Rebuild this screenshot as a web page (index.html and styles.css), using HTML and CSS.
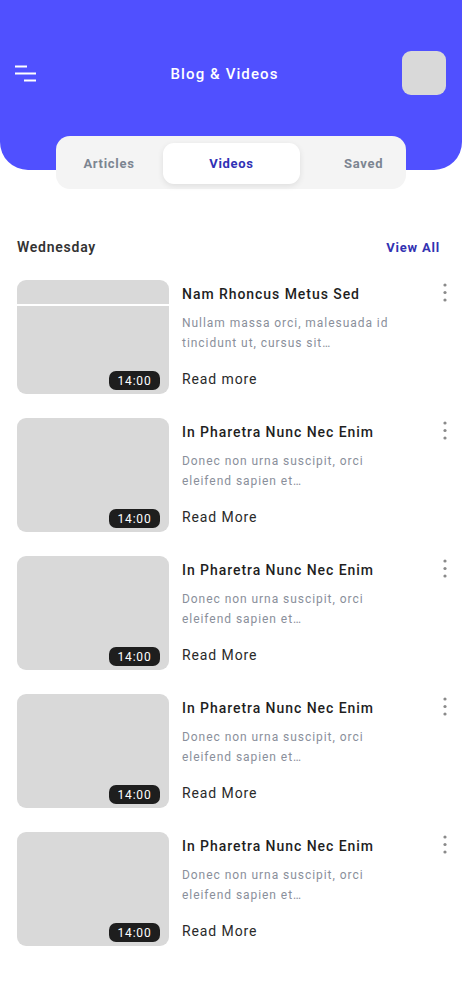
FILE: index.html
```html
<!DOCTYPE html>
<html lang="en">
<head>
<meta charset="utf-8">
<title>Blog & Videos</title>
<link rel="stylesheet" href="styles.css">
</head>
<body>
<header class="header">
  <div class="topbar">
    <svg class="menu" width="22" height="18" viewBox="0 0 22 18" aria-hidden="true">
      <path d="M0 1.5H12M0 8.5H21M9 15.5H21" stroke="#fff" stroke-width="2" fill="none"/>
    </svg>
    <h1 class="title">Blog &amp; Videos</h1>
    <div class="avatar"></div>
  </div>
</header>

<nav class="tabs">
  <span class="tab tab-articles">Articles</span>
  <span class="tab tab-active">Videos</span>
  <span class="tab tab-saved">Saved</span>
</nav>

<div class="section-head">
  <span class="day">Wednesday</span>
  <span class="view-all">View All</span>
</div>

<main class="list">
  <article class="card">
    <div class="thumb"><span class="thumb-line"></span><span class="badge">14:00</span></div>
    <div class="info">
      <h2 class="card-title">Nam Rhoncus Metus Sed</h2>
      <p class="desc">Nullam massa orci, malesuada id tincidunt ut, cursus sit…</p>
      <span class="more">Read more</span>
    </div>
    <svg class="kebab" width="4" height="20" viewBox="0 0 4 20" aria-hidden="true"><circle cx="2" cy="2" r="1.6"/><circle cx="2" cy="9.5" r="1.6"/><circle cx="2" cy="17" r="1.6"/></svg>
  </article>

  <article class="card">
    <div class="thumb"><span class="badge">14:00</span></div>
    <div class="info">
      <h2 class="card-title">In Pharetra Nunc Nec Enim</h2>
      <p class="desc">Donec non urna suscipit, orci eleifend sapien et…</p>
      <span class="more">Read More</span>
    </div>
    <svg class="kebab" width="4" height="20" viewBox="0 0 4 20" aria-hidden="true"><circle cx="2" cy="2" r="1.6"/><circle cx="2" cy="9.5" r="1.6"/><circle cx="2" cy="17" r="1.6"/></svg>
  </article>

  <article class="card">
    <div class="thumb"><span class="badge">14:00</span></div>
    <div class="info">
      <h2 class="card-title">In Pharetra Nunc Nec Enim</h2>
      <p class="desc">Donec non urna suscipit, orci eleifend sapien et…</p>
      <span class="more">Read More</span>
    </div>
    <svg class="kebab" width="4" height="20" viewBox="0 0 4 20" aria-hidden="true"><circle cx="2" cy="2" r="1.6"/><circle cx="2" cy="9.5" r="1.6"/><circle cx="2" cy="17" r="1.6"/></svg>
  </article>

  <article class="card">
    <div class="thumb"><span class="badge">14:00</span></div>
    <div class="info">
      <h2 class="card-title">In Pharetra Nunc Nec Enim</h2>
      <p class="desc">Donec non urna suscipit, orci eleifend sapien et…</p>
      <span class="more">Read More</span>
    </div>
    <svg class="kebab" width="4" height="20" viewBox="0 0 4 20" aria-hidden="true"><circle cx="2" cy="2" r="1.6"/><circle cx="2" cy="9.5" r="1.6"/><circle cx="2" cy="17" r="1.6"/></svg>
  </article>

  <article class="card">
    <div class="thumb"><span class="badge">14:00</span></div>
    <div class="info">
      <h2 class="card-title">In Pharetra Nunc Nec Enim</h2>
      <p class="desc">Donec non urna suscipit, orci eleifend sapien et…</p>
      <span class="more">Read More</span>
    </div>
    <svg class="kebab" width="4" height="20" viewBox="0 0 4 20" aria-hidden="true"><circle cx="2" cy="2" r="1.6"/><circle cx="2" cy="9.5" r="1.6"/><circle cx="2" cy="17" r="1.6"/></svg>
  </article>
</main>
</body>
</html>
```

FILE: styles.css
```css
* { box-sizing: border-box; }
html, body { margin: 0; padding: 0; background: #ffffff; }
body { font-family: Roboto, "Liberation Sans", sans-serif; color: #222; }

.header {
  height: 170px;
  background: #5050ff;
  border-radius: 0 0 28px 28px;
  padding: 51px 16px 0 15px;
}
.topbar {
  height: 44px;
  display: flex;
  align-items: center;
  justify-content: space-between;
}
.menu { display: block; margin-top: 1px; }
.title {
  margin: 1px 0 0 10px;
  font-size: 15px;
  font-weight: 500;
  letter-spacing: 1.1px;
  color: #ffffff;
}
.avatar {
  width: 44px;
  height: 44px;
  border-radius: 9px;
  background: #d9d9d9;
}

.tabs {
  width: 350px;
  height: 53px;
  margin: -34px auto 0;
  background: #f4f4f4;
  border-radius: 14px;
  display: flex;
  align-items: center;
  padding: 1px 7px 0;
  font-size: 13px;
  font-weight: 700;
  letter-spacing: 0.7px;
  color: #7c8591;
}
.tab { display: flex; align-items: center; height: 41px; }
.tab-articles { width: 100px; justify-content: center; padding-right: 8px; }
.tab-active {
  width: 137px;
  justify-content: center;
  background: #ffffff;
  border-radius: 11px;
  box-shadow: 0 2px 6px rgba(0,0,0,0.09);
  color: #3131b5;
}
.tab-saved { padding-left: 44px; }

.section-head {
  margin-top: 50px;
  padding: 0 22px 0 17px;
  height: 16px;
  display: flex;
  justify-content: space-between;
  align-items: center;
  font-weight: 600;
}
.day { color: #333; font-size: 14px; letter-spacing: 0.75px; }
.view-all { color: #3232b2; font-size: 13px; font-weight: 700; letter-spacing: 0.8px; }

.list {
  margin-top: 25px;
  display: flex;
  flex-direction: column;
  gap: 24px;
}
.card {
  display: flex;
  padding-left: 17px;
  padding-right: 15px;
}
.thumb {
  position: relative;
  flex: 0 0 152px;
  height: 114px;
  border-radius: 9px;
  background: #d9d9d9;
}
.thumb-line {
  position: absolute;
  left: 0;
  right: 0;
  top: 24px;
  height: 2px;
  background: #ffffff;
}
.badge {
  position: absolute;
  right: 9px;
  bottom: 4px;
  width: 51px;
  height: 19px;
  border-radius: 7px;
  background: #1e1e1e;
  color: #ffffff;
  font-size: 12px;
  letter-spacing: 0.8px;
  display: flex;
  align-items: center;
  justify-content: center;
}
.info {
  flex: 1;
  padding: 5px 0 0 13px;
}
.card-title {
  margin: 0;
  font-size: 14px;
  line-height: 18px;
  font-weight: 500;
  letter-spacing: 0.95px;
  color: #1f1f1f;
}
.desc {
  margin: 10px 0 0;
  width: 222px;
  font-size: 12px;
  line-height: 20px;
  letter-spacing: 0.95px;
  color: #8a8f9b;
}
.more {
  display: block;
  margin-top: 17px;
  font-size: 14px;
  line-height: 18px;
  letter-spacing: 0.9px;
  color: #2a2a2a;
}
.kebab {
  flex: 0 0 4px;
  margin-top: 3px;
  fill: #8a8a8a;
}
```
